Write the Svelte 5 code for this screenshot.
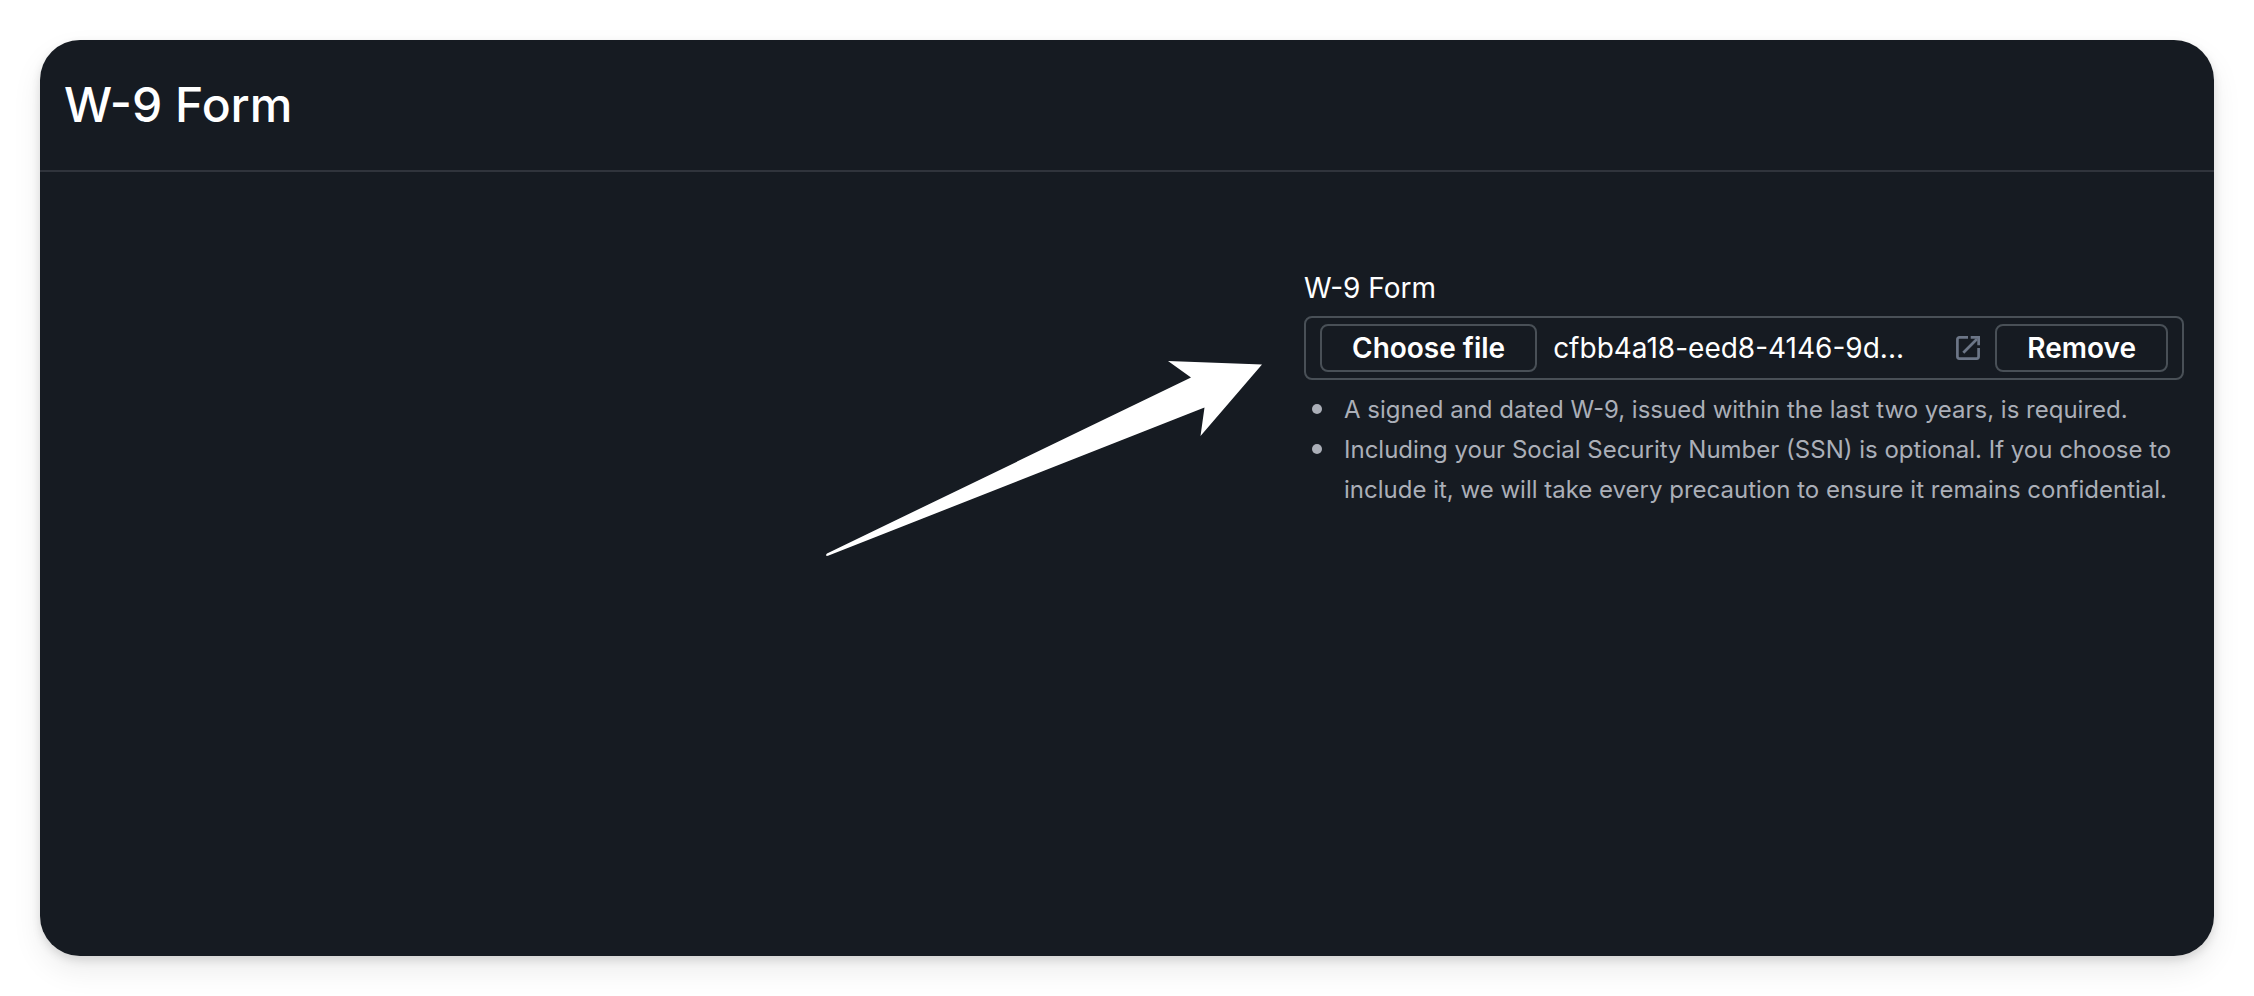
<script lang="ts">
  let fileName = 'cfbb4a18-eed8-4146-9d...';
  let picker: HTMLInputElement;

  const hints = [
    'A signed and dated W-9, issued within the last two years, is required.',
    'Including your Social Security Number (SSN) is optional. If you choose to include it, we will take every precaution to ensure it remains confidential.'
  ];

  function handleChange() {
    const file = picker.files?.[0];
    if (file) fileName = file.name;
  }

  function removeFile() {
    picker.value = '';
    fileName = '';
  }
</script>

<main class="card">
  <header class="card-header">
    <h1>W-9 Form</h1>
  </header>

  <div class="card-body">
    <div class="callout">
      <svg class="arrow" viewBox="26 21 436 195" aria-hidden="true">
        <path d="M462 24.5 368 21 391 37.5 27 213.5Q25.5 214.8 26.6 216L28 215.8 404.5 67.5 400.5 96Z" fill="#fff" />
      </svg>
    </div>

    <div class="form-group">
      <label for="w9-file">W-9 Form</label>
      <div class="file-field">
        <button id="w9-file" type="button" on:click={() => picker.click()}>Choose file</button>
        <input bind:this={picker} type="file" on:change={handleChange} hidden />
        <span class="file-name">{fileName}</span>
        {#if fileName}
          <a class="open-link" href="#file">
            <svg viewBox="0 0 24 24" width="24" height="24" fill="none" stroke="currentColor" aria-hidden="true">
              <path d="M12 1.4H3.4a2 2 0 0 0-2 2v17.2a2 2 0 0 0 2 2h17.2a2 2 0 0 0 2-2V12" stroke-width="2.7" />
              <path d="M7.3 16.7 21 3" stroke-width="2.7" />
              <path d="M14.7 0H24v9.3h-2.7V2.7h-6.6z" fill="currentColor" stroke="none" />
            </svg>
          </a>
          <button type="button" on:click={removeFile}>Remove</button>
        {/if}
      </div>
      <ul class="hints">
        {#each hints as hint}
          <li>{hint}</li>
        {/each}
      </ul>
    </div>
  </div>
</main>

<style>
  :global(body) {
    background: #fff;
  }

  .card {
    box-sizing: border-box;
    min-height: calc(100vh - 80px);
    margin: 40px;
    border-radius: 40px;
    background: #161b22;
    box-shadow: 0 14px 30px rgba(0, 0, 0, 0.08), 0 4px 10px rgba(0, 0, 0, 0.12);
    color: #fff;
    font-family: Inter, 'Liberation Sans', sans-serif;
    font-size: 28px;
    line-height: 40px;
  }

  .card-header {
    padding: 35px 24px;
    border-bottom: 2px solid #30343c;
  }

  h1 {
    margin: 0;
    font-size: 48px;
    font-weight: 500;
    line-height: 60px;
  }

  .card-body {
    display: grid;
    grid-template-columns: 7fr 5fr;
    padding: 96px 30px 96px 32px;
  }

  .callout {
    display: flex;
    justify-content: flex-end;
    align-items: flex-start;
    padding: 93px 42px 0 0;
  }

  .arrow {
    width: 436px;
    max-width: 100%;
  }

  .form-group {
    min-width: 0;
  }

  label {
    display: block;
    margin-bottom: 8px;
  }

  .file-field {
    display: flex;
    align-items: center;
    box-sizing: border-box;
    height: 64px;
    padding: 0 14px;
    border: 2px solid #495057;
    border-radius: 8px;
  }

  button {
    flex: none;
    height: 48px;
    padding: 0 30px;
    border: 2px solid #495057;
    border-radius: 8px;
    background: transparent;
    color: inherit;
    font: inherit;
    font-weight: 600;
    line-height: 44px;
    cursor: pointer;
  }

  .file-name {
    flex: 1;
    min-width: 0;
    margin: 0 16px;
    overflow: hidden;
    text-overflow: ellipsis;
    white-space: nowrap;
  }

  .open-link {
    display: flex;
    margin-right: 15px;
    color: #6c7687;
  }

  .hints {
    margin: 10px 0 0;
    padding: 0;
    color: #abafb8;
    font-size: 24px;
    list-style: none;
  }

  .hints li {
    position: relative;
    padding-left: 40px;
  }

  .hints li::before {
    position: absolute;
    top: 14px;
    left: 8px;
    width: 10px;
    height: 10px;
    border-radius: 50%;
    background: currentColor;
    content: '';
  }
</style>
